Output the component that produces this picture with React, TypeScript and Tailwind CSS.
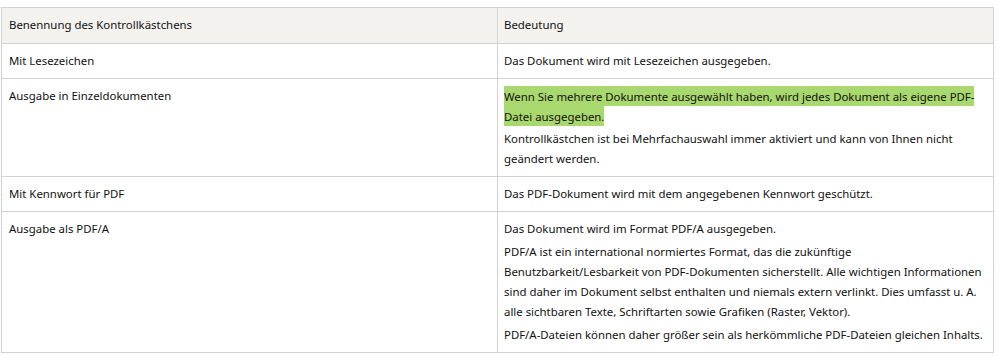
const rows = [
  { name: 'Mit Lesezeichen', text: [<>Das Dokument wird mit Lesezeichen ausgegeben.</>] },
  {
    name: 'Ausgabe in Einzeldokumenten',
    text: [
      <span className="bg-[#a9d86e] [box-decoration-break:clone] py-[2.5px]">
        Wenn Sie mehrere Dokumente ausgewählt haben, wird jedes Dokument als eigene PDF-Datei ausgegeben.
      </span>,
      <>Kontrollkästchen ist bei Mehrfachauswahl immer aktiviert und kann von Ihnen nicht geändert werden.</>,
    ],
  },
  { name: 'Mit Kennwort für PDF', text: [<>Das PDF-Dokument wird mit dem angegebenen Kennwort geschützt.</>] },
  {
    name: 'Ausgabe als PDF/A',
    text: [
      <>Das Dokument wird im Format PDF/A ausgegeben.</>,
      <>
        PDF/A ist ein international normiertes Format, das die zukünftige Benutzbarkeit/Lesbarkeit von PDF-Dokumenten
        sicherstellt. Alle wichtigen Informationen sind daher im Dokument selbst enthalten und niemals extern verlinkt.
        Dies umfasst u. A. alle sichtbaren Texte, Schriftarten sowie Grafiken (Raster, Vektor).
      </>,
      <>PDF/A-Dateien können daher größer sein als herkömmliche PDF-Dateien gleichen Inhalts.</>,
    ],
  },
];

export default function App() {
  return (
    <div className="bg-white w-[999px] h-[358px] pt-[7px] pl-[1px] font-['Noto_Sans',sans-serif] text-[11.4px] leading-[20px] text-[#111]">
      <table className="w-[993px] border-collapse table-fixed">
        <thead>
          <tr className="bg-[#f3f2ef]">
            <th className="w-1/2 border border-[#d2d2d2] px-[7px] pt-[7px] pb-[8px] text-left font-normal align-top">
              Benennung des Kontrollkästchens
            </th>
            <th className="border border-[#d2d2d2] px-[6px] pt-[7px] pb-[8px] text-left font-normal align-top">
              Bedeutung
            </th>
          </tr>
        </thead>
        <tbody>
          {rows.map((r) => (
            <tr key={r.name}>
              <td className="border border-[#d2d2d2] px-[7px] pt-[7px] pb-[7px] align-top">{r.name}</td>
              <td className="border border-[#d2d2d2] px-[6px] pt-[7px] pb-[7px] align-top">
                {r.text.map((t, i) => (
                  <p key={i} className={i > 0 ? 'mt-[3px]' : ''}>
                    {t}
                  </p>
                ))}
              </td>
            </tr>
          ))}
        </tbody>
      </table>
    </div>
  );
}
